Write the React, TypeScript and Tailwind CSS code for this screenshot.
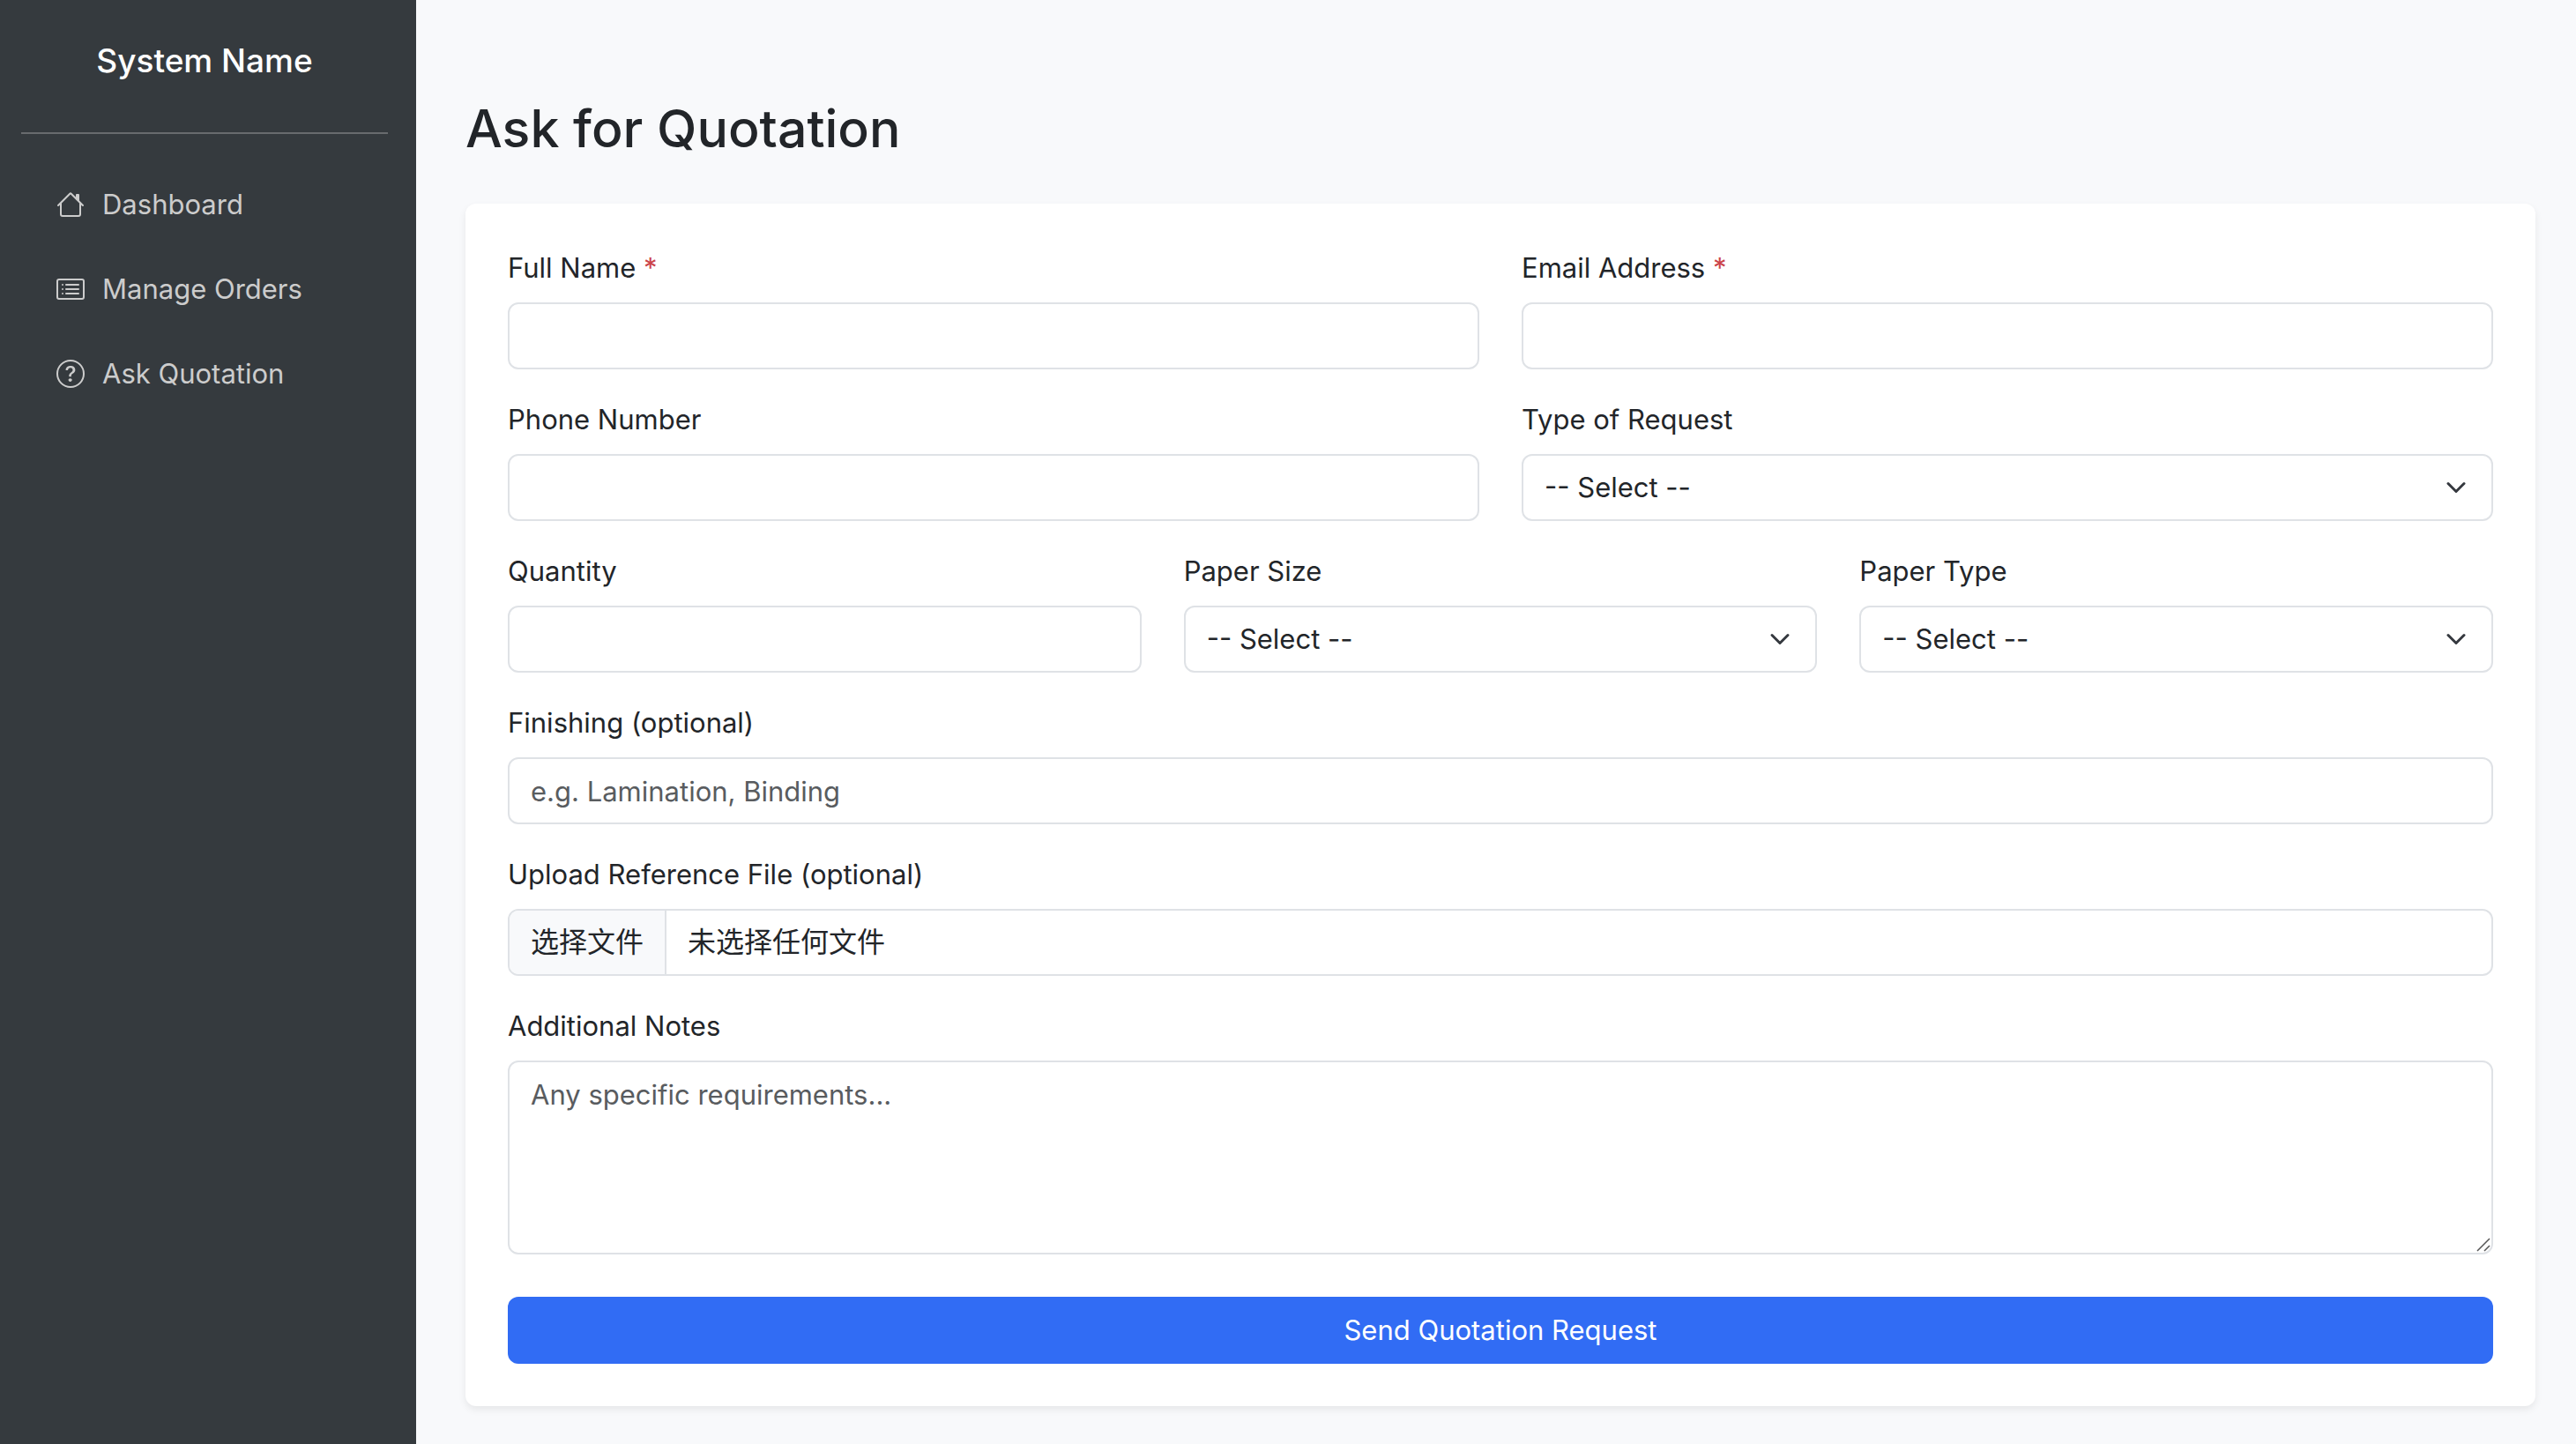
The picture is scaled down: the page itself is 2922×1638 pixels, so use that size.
import type { ComponentType, ReactNode } from "react";
import { BsCardList, BsHouse, BsQuestionCircle } from "react-icons/bs";

const CONTROL =
  "block w-full h-[76px] rounded-xl border-2 border-[#dfe2e6] bg-white px-6 text-[31px] text-[#222529] placeholder:text-[#595c5f]";

function Field({ id, label, required, children }: { id: string; label: string; required?: boolean; children: ReactNode }) {
  return (
    <div>
      <label htmlFor={id} className="mb-[15px] block leading-[49px]">
        {label}
        {required && <span className="text-[#cb444a]"> *</span>}
      </label>
      {children}
    </div>
  );
}

function TextField({ id, label, required, type = "text", placeholder }: { id: string; label: string; required?: boolean; type?: string; placeholder?: string }) {
  return (
    <Field id={id} label={label} required={required}>
      <input id={id} type={type} required={required} placeholder={placeholder} className={CONTROL} />
    </Field>
  );
}

function SelectField({ id, label, options }: { id: string; label: string; options: string[] }) {
  return (
    <Field id={id} label={label}>
      <div className="relative">
        <select id={id} className={`${CONTROL} appearance-none`}>
          <option>-- Select --</option>
          {options.map((option) => (
            <option key={option}>{option}</option>
          ))}
        </select>
        <svg viewBox="0 0 16 16" fill="none" className="pointer-events-none absolute inset-y-0 right-[30px] my-auto size-6">
          <path d="m2 5 6 6 6-6" stroke="#35393f" strokeWidth="2" strokeLinecap="round" strokeLinejoin="round" />
        </svg>
      </div>
    </Field>
  );
}

function NavLink({ icon: Icon, children }: { icon: ComponentType<{ className?: string }>; children: ReactNode }) {
  return (
    <a href="#" className="flex h-20 items-center gap-5 px-10 text-[#ccc]">
      <Icon className="size-8 shrink-0" />
      {children}
    </a>
  );
}

export default function App() {
  return (
    <div className="flex min-h-screen bg-[#f8f9fb] font-[Inter,'Noto_Sans_CJK_SC',sans-serif] text-[31px] leading-[48px] text-[#222529]">
      <aside className="w-[472px] shrink-0 bg-[#353a3e] pr-8 pl-6 pt-[45px]">
        <h4 className="text-center text-[37px] leading-[48px] font-medium text-white">System Name</h4>
        <hr className="mt-[57px] mb-10 border-t-2 border-[#686b6e]" />
        <nav className="flex flex-col gap-4">
          <NavLink icon={BsHouse}>Dashboard</NavLink>
          <NavLink icon={BsCardList}>Manage Orders</NavLink>
          <NavLink icon={BsQuestionCircle}>Ask Quotation</NavLink>
        </nav>
      </aside>

      <main className="min-w-0 flex-1 pt-[106px] pr-[46px] pb-10 pl-14">
        <h2 className="mb-[46px] text-[59px] leading-[79px] font-medium">Ask for Quotation</h2>

        <form className="flex flex-col gap-8 rounded-xl bg-white p-12 shadow-[0_4px_8px_rgba(0,0,0,0.075)]">
          <div className="grid grid-cols-2 gap-x-12 gap-y-8">
            <TextField id="name" label="Full Name" required />
            <TextField id="email" label="Email Address" type="email" required />
            <TextField id="phone" label="Phone Number" type="tel" />
            <SelectField id="request" label="Type of Request" options={["Printing", "Design"]} />
          </div>
          <div className="grid grid-cols-3 gap-x-12">
            <TextField id="quantity" label="Quantity" type="number" />
            <SelectField id="size" label="Paper Size" options={["A3", "A4", "A5"]} />
            <SelectField id="paper" label="Paper Type" options={["Matte", "Glossy"]} />
          </div>
          <TextField id="finishing" label="Finishing (optional)" placeholder="e.g. Lamination, Binding" />
          <Field id="file" label="Upload Reference File (optional)">
            <input id="file" type="file" className="sr-only" />
            <label htmlFor="file" className="flex h-[76px] overflow-hidden rounded-xl border-2 border-[#dfe2e6] text-[32px]">
              <span className="flex items-center border-r-2 border-[#dfe2e6] bg-[#f8f9fb] px-6">选择文件</span>
              <span className="flex items-center px-6">未选择任何文件</span>
            </label>
          </Field>
          <Field id="notes" label="Additional Notes">
            <div className="relative">
              <textarea id="notes" placeholder="Any specific requirements..." className={`${CONTROL} h-[220px] resize-none py-3 leading-[49px]`} />
              <svg viewBox="0 0 16 16" fill="none" stroke="#555" strokeWidth="1.5" className="pointer-events-none absolute right-[3px] bottom-[3px] size-4">
                <path d="M1 15 15 1M9 15l6-6" />
              </svg>
            </div>
          </Field>
          <button type="submit" className="mt-4 h-[76px] rounded-xl bg-[#316cf4] text-white">
            Send Quotation Request
          </button>
        </form>
      </main>
    </div>
  );
}
